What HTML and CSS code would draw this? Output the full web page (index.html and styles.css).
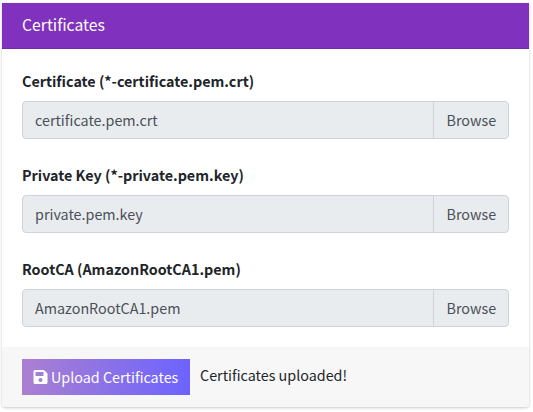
FILE: index.html
```html
<!DOCTYPE html>
<html lang="en">
<head>
<meta charset="utf-8">
<title>Certificates</title>
<link rel="stylesheet" href="styles.css">
</head>
<body>
<section class="card">
  <header class="card-header">Certificates</header>
  <div class="card-body">
    <div class="form-group"><div class="label">Certificate (*-certificate.pem.crt)</div><div class="file"><span class="name">certificate.pem.crt</span><span class="browse">Browse</span></div></div>
    <div class="form-group"><div class="label">Private Key (*-private.pem.key)</div><div class="file"><span class="name">private.pem.key</span><span class="browse">Browse</span></div></div>
    <div class="form-group"><div class="label">RootCA (AmazonRootCA1.pem)</div><div class="file"><span class="name">AmazonRootCA1.pem</span><span class="browse">Browse</span></div></div>
  </div>
  <footer class="card-footer">
    <button class="upload" type="button"><svg class="icon" viewBox="0 0 448 512"><path fill="currentColor" d="M433.941 129.941l-83.882-83.882A48 48 0 0 0 316.118 32H48C21.49 32 0 53.49 0 80v352c0 26.51 21.49 48 48 48h352c26.51 0 48-21.49 48-48V163.882a48 48 0 0 0-14.059-33.941zM224 416c-35.346 0-64-28.654-64-64 0-35.346 28.654-64 64-64s64 28.654 64 64c0 35.346-28.654 64-64 64zm96-304.52V212c0 6.627-5.373 12-12 12H76c-6.627 0-12-5.373-12-12V108c0-6.627 5.373-12 12-12h228.52c3.183 0 6.235 1.264 8.485 3.515l3.48 3.48A11.996 11.996 0 0 1 320 111.48z"/></svg><span>Upload Certificates</span></button>
    <span class="status">Certificates uploaded!</span>
  </footer>
</section>
</body>
</html>
```
FILE: styles.css
```css
* { box-sizing: border-box; }
body { margin: 0; min-height: 412px; padding: 3px 3px 0 2px; background: #fff; color: #212529; font: 14.34px/24px "Noto Sans CJK SC", sans-serif; }
.card { width: 527px; height: 404px; border-radius: 0 0 4px 4px; overflow: hidden; box-shadow: 0 0 1px rgba(0,0,0,.125), 0 1px 3px rgba(0,0,0,.2); }
.card-header { height: 46px; padding: 10px 20px; background: #8031bd; border-bottom: 1px solid #702aa6; color: #fff; font-size: 15.75px; }
.card-body { height: 298px; padding: 20px; }
.form-group { height: 94px; }
.label { height: 32px; font-weight: 700; }
.file { display: flex; width: 487px; height: 38px; border: 1px solid #ced4da; border-radius: 4px; background: #e9ecef; color: #495057; overflow: hidden; }
.name { flex: 1; padding: 6px 12px; }
.browse { width: 75px; padding: 6px 12.5px; border-left: 1px solid #ced4da; }
.card-footer { display: flex; height: 60px; padding: 12px 20px; background: #f7f7f7; gap: 10px; }
.upload { display: flex; align-items: center; width: 168px; height: 36px; padding: 0 11px; gap: 3px; border: 0; background: linear-gradient(90deg, #aa80d0, #6c63ff); color: #fff; font: inherit; white-space: nowrap; }
.icon { width: 15px; height: 16px; flex: none; }
.status { line-height: 32px; }
```
